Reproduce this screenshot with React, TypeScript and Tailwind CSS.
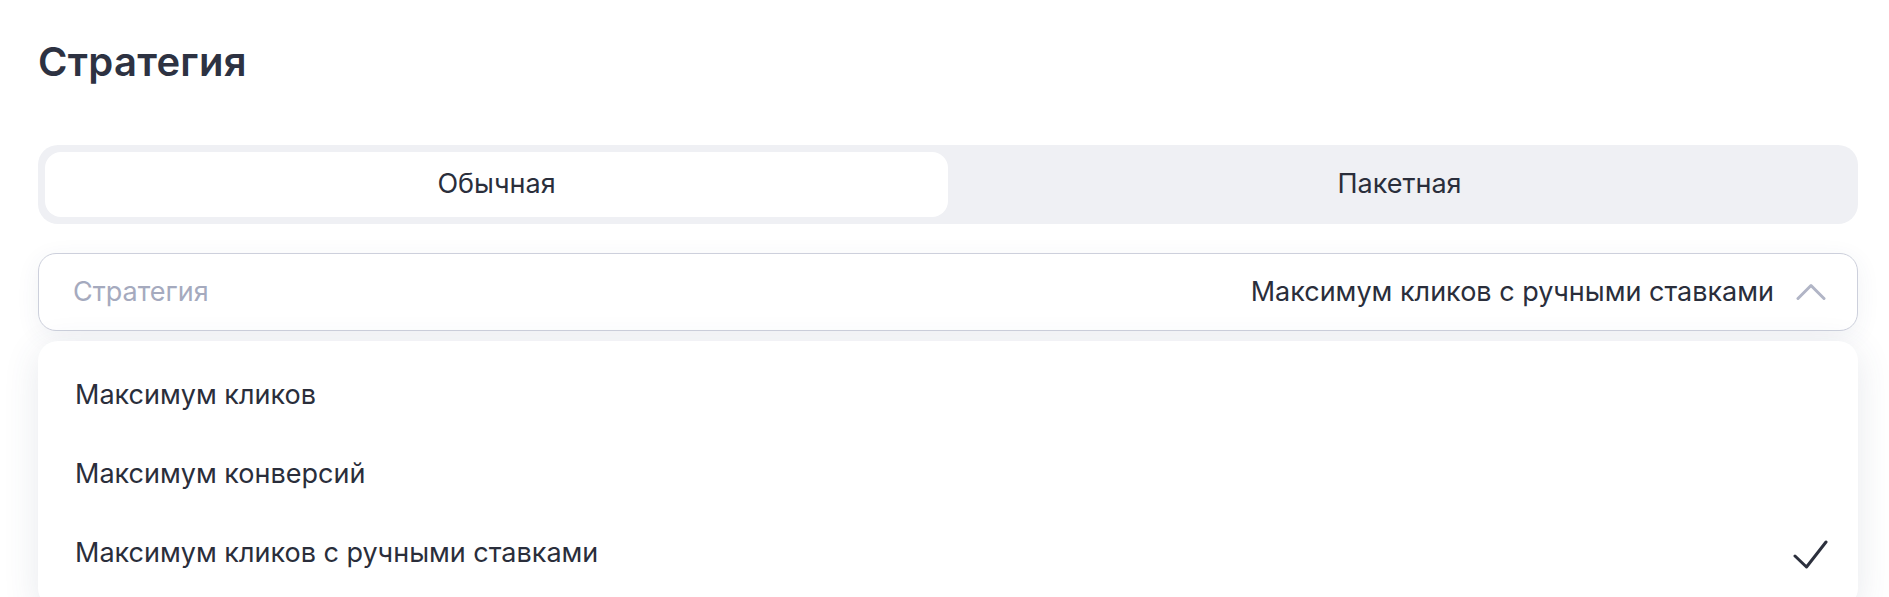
import React from "react";

const items = [
  "Максимум кликов",
  "Максимум конверсий",
  "Максимум кликов с ручными ставками",
];

export default function App() {
  return (
    <div
      className="min-h-screen w-full bg-white pl-[38px] pr-[31px] pt-[38px] text-[#2a2e3b]"
      style={{ fontFamily: "Inter, 'Noto Sans', sans-serif" }}
    >
      <h1 className="text-[40px] font-semibold leading-[48px] tracking-[0.3px] text-[#2d3242]">Стратегия</h1>

      <div className="mt-[59px] flex h-[79px] rounded-[20px] bg-[#eff0f4] p-[7px]">
        <div className="flex flex-1 items-center justify-center rounded-[16px] bg-white text-[27px]">
          Обычная
        </div>
        <div className="flex flex-1 items-center justify-center text-[27px]">
          Пакетная
        </div>
      </div>

      <div className="mt-[29px] flex h-[78px] items-center rounded-[18px] border border-[#cdd0dc] bg-white pl-[34px] pr-[31px] text-[27px] shadow-[0_6px_24px_rgba(60,70,110,0.07)]">
        <span className="text-[#a5aabe]">Стратегия</span>
        <span className="ml-auto">Максимум кликов с ручными ставками</span>
        <svg className="ml-[22px]" width="30" height="18" viewBox="0 0 30 18" fill="none">
          <path d="M2 15.5L15 2.5L28 15.5" stroke="#b1b5c6" strokeWidth="3" strokeLinecap="round" strokeLinejoin="round" />
        </svg>
      </div>

      <div className="mt-[10px] rounded-[20px] bg-white py-[15px] shadow-[0_8px_36px_rgba(60,70,110,0.12)]">
        {items.map((t, i) => (
          <div key={t} className="flex h-[79px] items-center pl-[37px] pr-[30px] text-[27px]">
            <span>{t}</span>
            {i === 2 && (
              <svg className="ml-auto" width="35" height="30" viewBox="0 0 35 30" fill="none">
                <path d="M2 17L13.5 28L33 3" stroke="#2c303d" strokeWidth="3" strokeLinecap="round" strokeLinejoin="round" />
              </svg>
            )}
          </div>
        ))}
      </div>
    </div>
  );
}
